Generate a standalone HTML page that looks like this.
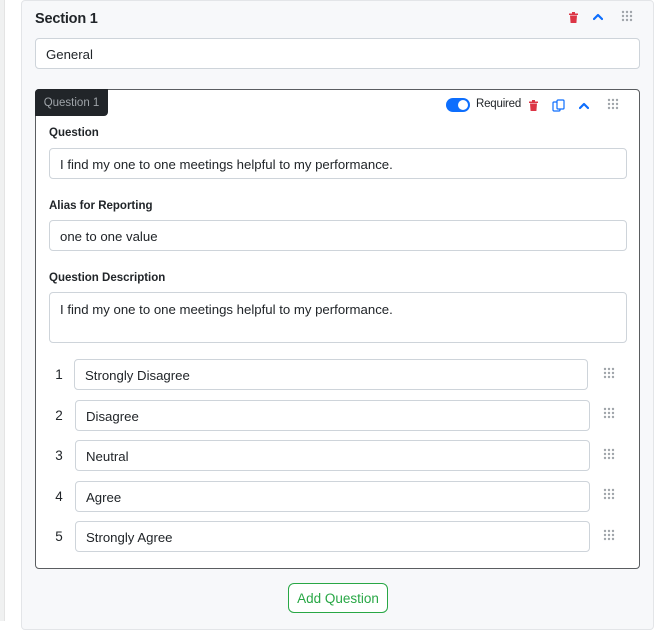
<!DOCTYPE html>
<html><head><style>
*{box-sizing:border-box;margin:0;padding:0}
body{width:670px;height:621px;background:#fff;font-family:"Liberation Sans",sans-serif;position:relative;overflow:hidden;color:#212529}
.abs{position:absolute}
.leftbar{left:0;top:0;width:5px;height:621px;background:#f0f1f1;border-right:1px solid #e4e4e4}
.sec{left:21px;top:0;width:633px;height:630px;background:#f7f8fa;border:1px solid #e3e5e8;border-radius:4px}
.inp{position:absolute;background:#fff;border:1px solid #ced4da;border-radius:4px;font-size:13.2px;padding-left:10px;padding-top:2px;display:flex;align-items:center}
.lbl{position:absolute;font-size:11.5px;font-weight:bold;left:49px}
.card{left:35px;top:89px;width:605px;height:480px;background:#fff;border:1px solid #5a5d60;border-radius:4px}
.tab{left:35px;top:89px;width:73px;height:27px;background:#212529;color:#9ea3a8;font-size:11.5px;display:flex;align-items:center;justify-content:center;border-radius:4px 0 4px 0}
.num{position:absolute;left:54px;font-size:13.5px;width:10px;text-align:center}
.dots{position:absolute;width:12px;height:12px}
.btn{left:288px;top:583px;width:100px;height:30px;border:1px solid #28a745;border-radius:6px;color:#28a745;font-size:13.5px;display:flex;align-items:center;justify-content:center;background:#fff}
</style></head><body>
<svg width="0" height="0" style="position:absolute"><defs>
<g id="d" fill="#a0a5aa"><circle cx="2" cy="2" r="1.2"/><circle cx="6" cy="2" r="1.2"/><circle cx="10" cy="2" r="1.2"/><circle cx="2" cy="6" r="1.2"/><circle cx="6" cy="6" r="1.2"/><circle cx="10" cy="6" r="1.2"/><circle cx="2" cy="10" r="1.2"/><circle cx="6" cy="10" r="1.2"/><circle cx="10" cy="10" r="1.2"/></g>
<g id="t" fill="#dc3545"><rect x="0" y="1.5" width="9" height="1.5"/><rect x="3" y="0" width="3" height="2"/><path d="M1 3.5h7l-0.6 7.5h-5.8z"/></g>
<g id="c" fill="none" stroke="#0d6efd" stroke-width="2.2" stroke-linecap="round" stroke-linejoin="round"><path d="M1 7l4-4 4 4"/></g>
</defs></svg>
<div class="abs leftbar"></div>
<div class="abs sec"></div>
<div class="abs" style="left:35px;top:11px;font-size:14.5px;font-weight:bold;letter-spacing:-0.2px">Section 1</div>
<svg class="abs" style="left:569px;top:12px" width="9" height="11"><use href="#t"/></svg>
<svg class="abs" style="left:593px;top:12px" width="10" height="10"><use href="#c"/></svg>
<svg class="abs dots" style="left:621px;top:10px"><use href="#d"/></svg>
<div class="inp" style="left:35px;top:38px;width:605px;height:31px">General</div>
<div class="abs card"></div>
<div class="abs tab">Question 1</div>
<div class="abs" style="left:446px;top:98px;width:24px;height:14px;border-radius:7px;background:#0d6efd"><div style="position:absolute;right:2px;top:2px;width:10px;height:10px;border-radius:50%;background:#fff"></div></div>
<div class="abs" style="left:476px;top:98px;font-size:11.5px;letter-spacing:-0.2px">Required</div>
<svg class="abs" style="left:529px;top:100px" width="9" height="11"><use href="#t"/></svg>
<svg class="abs" style="left:552px;top:99px" width="13" height="13" fill="none" stroke="#0d6efd" stroke-width="1.2"><rect x="1" y="3" width="7" height="9" rx="1"/><rect x="5" y="1" width="7" height="9" rx="1" fill="#fff"/></svg>
<svg class="abs" style="left:579px;top:101px" width="10" height="10"><use href="#c"/></svg>
<svg class="abs dots" style="left:607px;top:98px"><use href="#d"/></svg>
<div class="lbl" style="top:127px">Question</div>
<div class="inp" style="left:49px;top:148px;width:578px;height:31px">I find my one to one meetings helpful to my performance.</div>
<div class="lbl" style="top:200px">Alias for Reporting</div>
<div class="inp" style="left:49px;top:220px;width:578px;height:31px">one to one value</div>
<div class="lbl" style="top:272px">Question Description</div>
<div class="inp" style="left:49px;top:292px;width:578px;height:51px;align-items:flex-start;padding-top:9px">I find my one to one meetings helpful to my performance.</div>
<div class="num" style="top:367px">1</div><div class="inp" style="left:74px;top:359px;width:514px;height:31px">Strongly Disagree</div>
<div class="num" style="top:408px">2</div><div class="inp" style="left:75px;top:400px;width:515px;height:31px">Disagree</div>
<div class="num" style="top:448px">3</div><div class="inp" style="left:75px;top:440px;width:515px;height:31px">Neutral</div>
<div class="num" style="top:489px">4</div><div class="inp" style="left:75px;top:481px;width:515px;height:31px">Agree</div>
<div class="num" style="top:529px">5</div><div class="inp" style="left:75px;top:521px;width:515px;height:31px">Strongly Agree</div>
<svg class="abs dots" style="left:603px;top:367px"><use href="#d"/></svg>
<svg class="abs dots" style="left:603px;top:407px"><use href="#d"/></svg>
<svg class="abs dots" style="left:603px;top:448px"><use href="#d"/></svg>
<svg class="abs dots" style="left:603px;top:488px"><use href="#d"/></svg>
<svg class="abs dots" style="left:603px;top:529px"><use href="#d"/></svg>
<div class="abs btn">Add Question</div>
</body></html>
